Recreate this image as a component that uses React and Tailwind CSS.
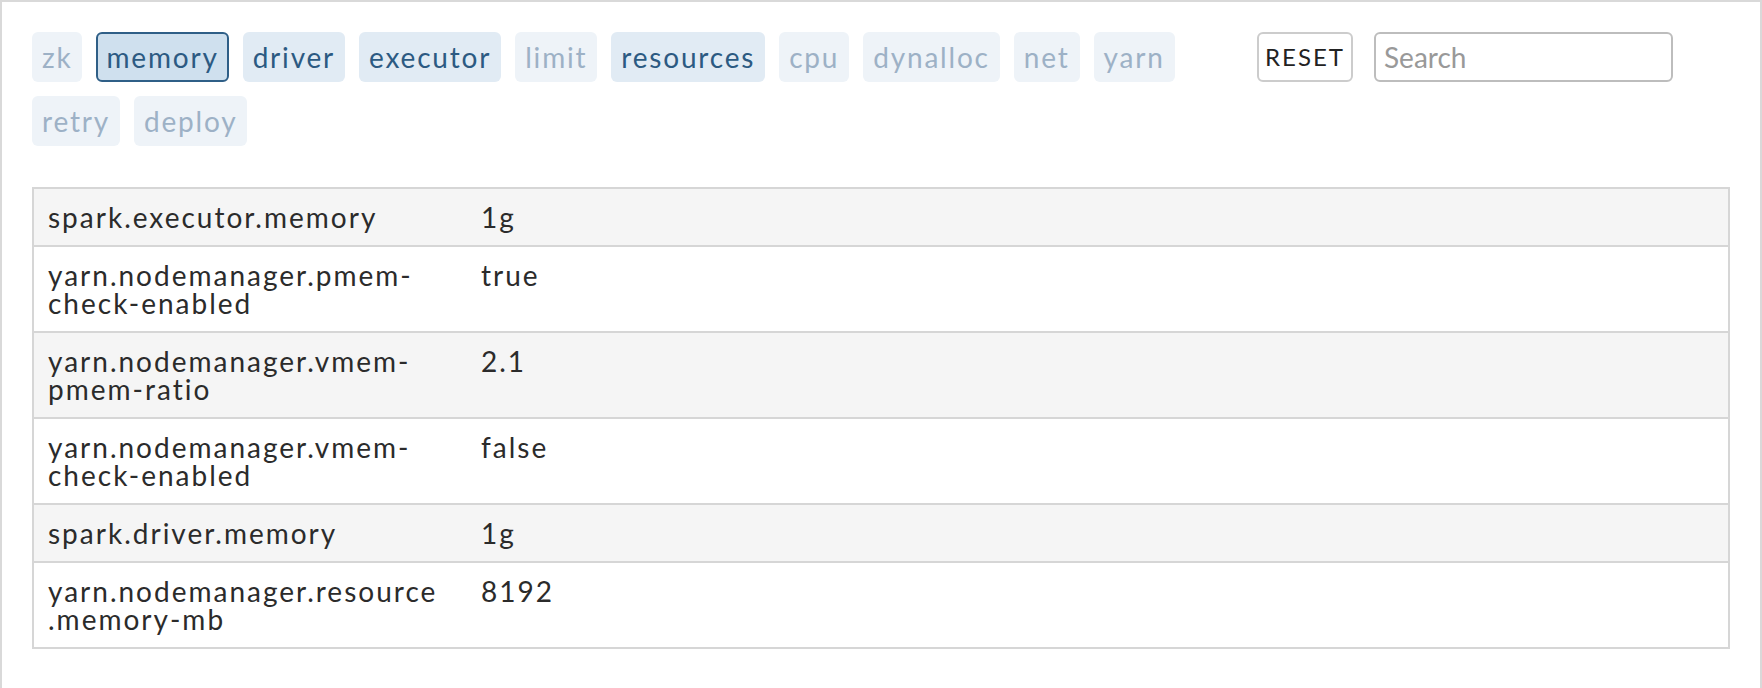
import React from "react";

const tags = [
  ["zk", 0],
  ["memory", 2],
  ["driver", 1],
  ["executor", 1],
  ["limit", 0],
  ["resources", 1],
  ["cpu", 0],
  ["dynalloc", 0],
  ["net", 0],
  ["yarn", 0],
  ["retry", 0],
  ["deploy", 0],
];

const rows = [
  [["spark.executor.memory"], "1g"],
  [["yarn.nodemanager.pmem-", "check-enabled"], "true"],
  [["yarn.nodemanager.vmem-", "pmem-ratio"], "2.1"],
  [["yarn.nodemanager.vmem-", "check-enabled"], "false"],
  [["spark.driver.memory"], "1g"],
  [["yarn.nodemanager.resource", ".memory-mb"], "8192"],
];

function Tag({ label, state }) {
  const cls =
    state === 2
      ? "bg-[#cfe0ee] border-[#2f5f87] text-[#2c5a82]"
      : state === 1
      ? "bg-[#e1ebf4] border-transparent text-[#2c5a82]"
      : "bg-[#eef3f8] border-transparent text-[#9db1c6]";
  return (
    <span
      className={
        "inline-flex h-[50px] items-center rounded-[6px] border-2 px-[8px] text-[28px] leading-[28px] tracking-[1.8px] " +
        cls
      }
    >
      {label}
    </span>
  );
}

export default function App() {
  return (
    <div className="min-h-screen bg-white font-['Lato',sans-serif]">
      <div className="border-2 border-b-0 border-[#d9d9d9] px-[30px] pt-[30px] pb-[40px]">
        <div className="flex items-start">
          <div className="flex w-[1200px] flex-wrap gap-x-[14px] gap-y-[14px]">
            {tags.map(([t, s]) => (
              <Tag key={t} label={t} state={s} />
            ))}
          </div>
          <div className="ml-[25px] flex gap-[21px]">
            <button className="h-[50px] w-[96px] rounded-[6px] border-2 border-[#cccccc] bg-white text-[24px] tracking-[2px] text-[#222]">
              RESET
            </button>
            <input
              placeholder="Search"
              className="h-[50px] w-[299px] rounded-[6px] border-2 border-[#bdbdbd] px-[8px] text-[28px] text-[#333] placeholder:text-[#999] outline-none"
            />
          </div>
        </div>
        <div className="mt-[41px] border-2 border-[#d6d6d6]">
          {rows.map(([k, v], i) => (
            <div
              key={i}
              className={
                "flex text-[28px] leading-[28px] tracking-[2px] text-[#2b2b2b] " +
                (i % 2 === 0 ? "bg-[#f5f5f5] " : "bg-white ") +
                (i > 0 ? "border-t-2 border-[#d6d6d6]" : "")
              }
            >
              <div className="w-[433px] shrink-0 px-[14px] py-[14px]">
                {k.map((line, j) => (
                  <div key={j}>{line}</div>
                ))}
              </div>
              <div className="flex-1 px-[14px] py-[14px]">{v}</div>
            </div>
          ))}
        </div>
      </div>
    </div>
  );
}
